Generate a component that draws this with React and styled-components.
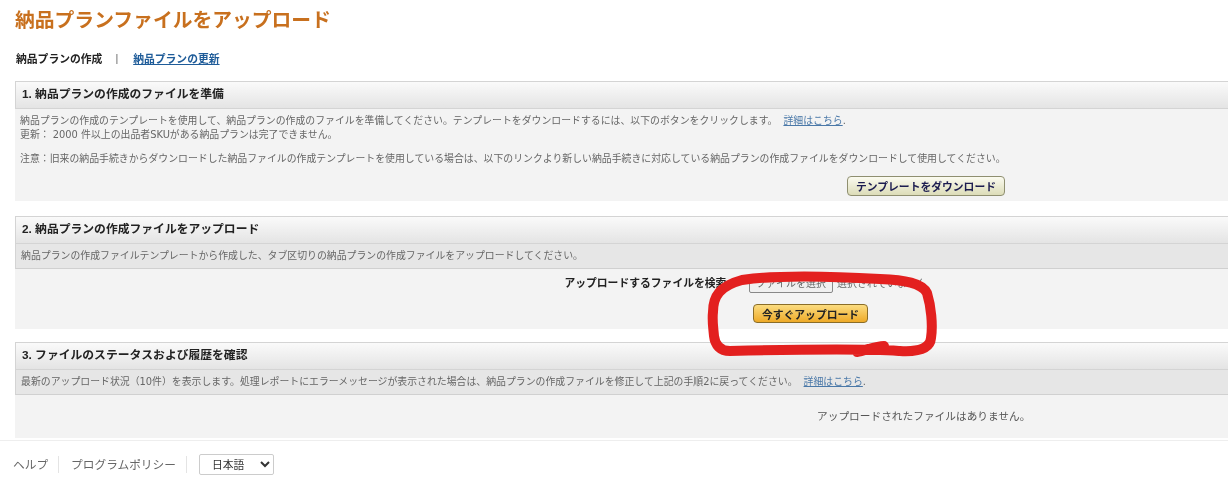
import React from 'react';
import styled, { createGlobalStyle } from 'styled-components';

const GlobalStyle = createGlobalStyle`
  html, body {
    margin: 0;
    padding: 0;
    height: 482px;
    overflow: hidden;
    background: #fff;
    font-family: "Liberation Sans", "Noto Sans CJK JP", sans-serif;
    color: #333;
  }
`;

// the reference is a slightly soft, upscaled capture
const Page = styled.div`
  position: relative;
  width: 1228px;
  height: 482px;
  overflow: hidden;
  filter: blur(0.35px);
`;

const Main = styled.main`
  height: 440px;
  padding: 9px 0 0 15px;
  box-sizing: border-box;
  overflow: hidden;
`;

const Title = styled.h1`
  margin: 0;
  font-size: 19.8px;
  line-height: 23px;
  font-weight: 700;
  color: #c8701e;
`;

const Tabs = styled.div`
  display: flex;
  align-items: center;
  margin: 17px 0 14px 1px;
  height: 18px;
  font-size: 10.8px;
`;

const ActiveTab = styled.b`
  color: #222;
`;

const TabDivider = styled.span`
  margin: 0 15px 0 13px;
  color: #666;
`;

const TabLink = styled.a`
  color: #1f5c99;
  font-weight: 700;
  text-decoration: underline;
`;

const Section = styled.section`
  margin-bottom: ${p => p.$gap}px;
  background: #f3f3f3;
`;

const SectionHead = styled.h2`
  margin: 0;
  height: 28px;
  box-sizing: border-box;
  padding-left: 6px;
  font-size: 11.8px;
  line-height: 25px;
  font-weight: 700;
  color: #222;
  background: linear-gradient(#fafafa, #e4e4e4);
  border: 1px solid #d4d4d4;
  border-right: 0;
`;

const SubBar = styled.p`
  margin: 0;
  height: 25px;
  box-sizing: border-box;
  padding-left: 5px;
  font-family: "DejaVu Sans", "Noto Sans CJK JP", sans-serif;
  font-size: 9.9px;
  line-height: 23px;
  color: #666;
  background: #e6e6e6;
  border-left: 1px solid #d4d4d4;
  border-bottom: 1px solid #d0d0d0;
`;

const Intro = styled.div`
  height: 92px;
  box-sizing: border-box;
  padding: 5px 0 0 5px;
  font-family: "DejaVu Sans", "Noto Sans CJK JP", sans-serif;
  font-size: 9.9px;
  line-height: 14px;
  color: #666;
`;

const Note = styled.p`
  margin: ${p => p.$top || 0}px 0 0;
`;

const SmallLink = styled.a`
  margin-left: 6px;
  color: #4a78a8;
  text-decoration: underline;
`;

const DownloadRow = styled.div`
  display: flex;
  justify-content: flex-end;
  margin: 10px 223px 0 0;
`;

const DownloadButton = styled.button`
  width: 158px;
  height: 20px;
  padding: 0;
  border: 1px solid #8f8f70;
  border-radius: 4px;
  background: linear-gradient(#fbfbf0, #dcdcb8);
  font: 700 10.8px "Liberation Sans", "Noto Sans CJK JP", sans-serif;
  color: #1c1c50;
`;

const UploadForm = styled.form`
  display: grid;
  grid-template-columns: 734px 1fr;
  grid-template-rows: 35px 25px;
  height: 60px;
  margin: 0;
`;

const FileLabel = styled.label`
  padding: 5px 19px 0 0;
  text-align: right;
  font-size: 10.8px;
  font-weight: 700;
  color: #222;
`;

const FileField = styled.div`
  display: flex;
  align-items: flex-start;
  gap: 4px;
  padding-top: 6px;
  font-size: 10px;
  color: #666;
`;

const FileButton = styled.span`
  width: 84px;
  height: 18px;
  box-sizing: border-box;
  border: 1px solid #888;
  border-radius: 2px;
  background: #f0f0f0;
  text-align: center;
  line-height: 16px;
`;

const UploadButton = styled.button`
  grid-column: 2;
  justify-self: start;
  width: 115px;
  height: 19px;
  margin-left: 4px;
  padding: 0;
  border: 1px solid #8a6d28;
  border-radius: 4px;
  background: linear-gradient(#fbdc80, #eeaa28);
  font: 700 10.8px "Liberation Sans", "Noto Sans CJK JP", sans-serif;
  color: #222;
`;

const EmptyMessage = styled.p`
  margin: 0;
  height: 43px;
  padding: 14px 0 0 802px;
  box-sizing: border-box;
  font-size: 10.7px;
  line-height: 15px;
  color: #555;
`;

const Footer = styled.footer`
  display: flex;
  align-items: center;
  height: 42px;
  box-sizing: border-box;
  padding: 6px 0 0 13px;
  border-top: 1px solid #eee;
  font-size: 11.7px;
  color: #666;
`;

const FooterLink = styled.a`
  padding-right: 10px;
  margin-right: 12px;
  border-right: 1px solid #e4e4e4;
  line-height: 17px;
`;

const LanguageSelect = styled.select`
  width: 75px;
  height: 21px;
  padding-left: 8px;
  border: 1px solid #ccc;
  border-radius: 2px;
  background: #fff;
  font: 10.8px "Liberation Sans", "Noto Sans CJK JP", sans-serif;
  color: #333;
`;

const Scribble = styled.svg`
  position: absolute;
  top: 0;
  left: 0;
  pointer-events: none;
`;

const App = () => (
  <Page>
    <GlobalStyle />
    <Main>
      <Title>納品プランファイルをアップロード</Title>
      <Tabs>
        <ActiveTab>納品プランの作成</ActiveTab>
        <TabDivider>|</TabDivider>
        <TabLink href="#">納品プランの更新</TabLink>
      </Tabs>

      <Section $gap={15}>
        <SectionHead>1. 納品プランの作成のファイルを準備</SectionHead>
        <Intro>
          <Note>
            納品プランの作成のテンプレートを使用して、納品プランの作成のファイルを準備してください。テンプレートをダウンロードするには、以下のボタンをクリックします。
            <SmallLink href="#">詳細はこちら</SmallLink>.
          </Note>
          <Note>更新： 2000 件以上の出品者SKUがある納品プランは完了できません。</Note>
          <Note $top={10}>
            注意：旧来の納品手続きからダウンロードした納品ファイルの作成テンプレートを使用している場合は、以下のリンクより新しい納品手続きに対応している納品プランの作成ファイルをダウンロードして使用してください。
          </Note>
          <DownloadRow>
            <DownloadButton type="button">テンプレートをダウンロード</DownloadButton>
          </DownloadRow>
        </Intro>
      </Section>

      <Section $gap={13}>
        <SectionHead>2. 納品プランの作成ファイルをアップロード</SectionHead>
        <SubBar>納品プランの作成ファイルテンプレートから作成した、タブ区切りの納品プランの作成ファイルをアップロードしてください。</SubBar>
        <UploadForm>
          <FileLabel>アップロードするファイルを検索:</FileLabel>
          <FileField>
            <FileButton>ファイルを選択</FileButton>
            <span>選択されていません</span>
          </FileField>
          <UploadButton type="button">今すぐアップロード</UploadButton>
        </UploadForm>
      </Section>

      <Section $gap={0}>
        <SectionHead>3. ファイルのステータスおよび履歴を確認</SectionHead>
        <SubBar>
          最新のアップロード状況（10件）を表示します。処理レポートにエラーメッセージが表示された場合は、納品プランの作成ファイルを修正して上記の手順2に戻ってください。
          <SmallLink href="#">詳細はこちら</SmallLink>.
        </SubBar>
        <EmptyMessage>アップロードされたファイルはありません。</EmptyMessage>
      </Section>
    </Main>

    <Footer>
      <FooterLink>ヘルプ</FooterLink>
      <FooterLink>プログラムポリシー</FooterLink>
      <LanguageSelect defaultValue="ja">
        <option value="ja">日本語</option>
      </LanguageSelect>
    </Footer>

    <Scribble width="1228" height="482" viewBox="0 0 1228 482">
      <path
        d="M713 312 C713 296 720 286 742 280 C775 275 830 276 880 279 C905 280 922 283 927 293 C931 306 933 325 931 338 C930 349 918 352 900 351 C885 350 860 348 730 351 C720 351 715 345 714 336 C713 325 712 320 713 312 Z M857 352 C865 351 875 346 884 346"
        fill="none"
        stroke="#e3201f"
        strokeWidth="10"
        strokeLinecap="round"
        strokeLinejoin="round"
      />
    </Scribble>
  </Page>
);

export default App;
